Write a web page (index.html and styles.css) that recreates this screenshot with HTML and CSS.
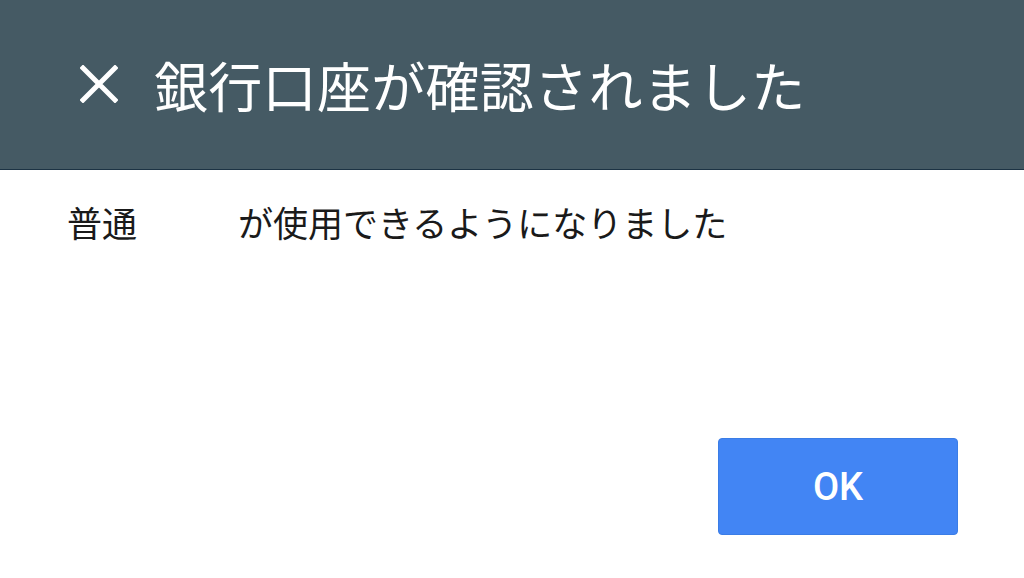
FILE: index.html
```html
<!DOCTYPE html>
<html lang="ja">

<head>
    <meta charset="UTF-8">
    <meta name="viewport" content="width=device-width, initial-scale=1.0">
    <title>銀行口座が確認されました</title>
    <link rel="stylesheet" href="styles.css">
</head>

<body>
    <div class="dialog">
        <div class="dialog_header">
            <svg class="close_icon" width="38" height="38" viewBox="0 0 38 38" aria-hidden="true">
                <path d="M3 3 L35 35 M35 3 L3 35" stroke="#fff" stroke-width="5" stroke-linecap="square" fill="none" />
            </svg>
            <h1 class="dialog_title">銀行口座が確認されました</h1>
        </div>

        <div class="dialog_body">
            <p>普通<span class="masked"></span>が使用できるようになりました</p>
        </div>

        <div class="dialog_footer">
            <button class="btn_ok">OK</button>
        </div>
    </div>
</body>

</html>
```

FILE: styles.css
```css
html, body {margin: 0; padding: 0; background: #fff;}
body {font-family: "Noto Sans CJK JP", "Noto Sans", sans-serif;}

.dialog {height: 578px; display: flex; flex-direction: column;}

.dialog_header {
    height: 169px;
    background: #455a64;
    border-bottom: 1px solid #1c3344;
    display: flex;
    align-items: center;
    padding-left: 80px;
    gap: 36px;
    box-sizing: content-box;
}
.close_icon {flex: none; margin-top: -2px;}
.dialog_title {margin: 0; color: #fff; font-size: 54px; font-weight: 400; line-height: 60px; letter-spacing: 0.3px;}

.dialog_body {flex: 1; padding: 28px 0 0 67px;}
.dialog_body p {margin: 0; font-size: 35px; line-height: 48px; color: #1a1a1a;}
.masked {display: inline-block; width: 101px;}

.dialog_footer {display: flex; justify-content: flex-end; padding: 0 66px 43px 0;}
.btn_ok {
    width: 240px;
    height: 97px;
    border: 1px solid #3b7de6;
    border-radius: 4px;
    background: #4285f4;
    color: #fff;
    font-family: Roboto, "Noto Sans", sans-serif;
    font-size: 38px;
    font-weight: 500;
    padding: 0;
}
```
